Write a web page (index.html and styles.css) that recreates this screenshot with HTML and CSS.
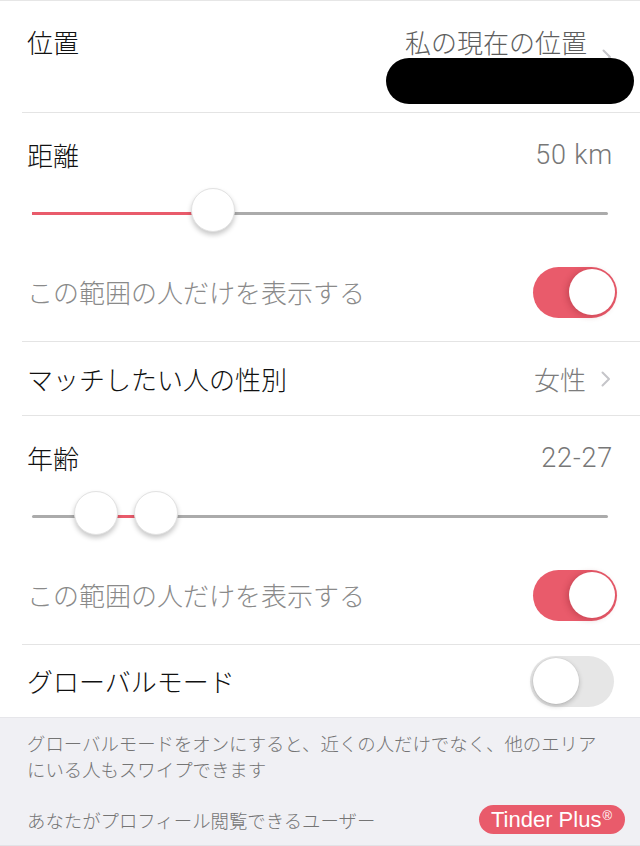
FILE: index.html
```html
<!DOCTYPE html>
<html lang="ja">
<head>
<meta charset="utf-8">
<title>設定</title>
<link rel="stylesheet" href="styles.css">
</head>
<body>
<main class="settings">
  <section class="row row-location">
    <span class="label label-top">位置</span>
    <span class="value value-top">私の現在の位置</span>
    <svg class="chev chev-mid" width="10" height="16" viewBox="0 0 10 16"><polyline points="1.5,1.5 8,8 1.5,14.5" /></svg>
    <div class="redact"></div>
  </section>
  <div class="sep"></div>

  <section class="group">
    <div class="head">
      <span class="label">距離</span>
      <span class="value num">50 km</span>
    </div>
    <div class="slider">
      <div class="track">
        <div class="fill" style="left:0%;width:31.4%"></div>
      </div>
      <div class="thumb" style="left:31.4%"></div>
    </div>
    <div class="toggle-line">
      <span class="sub">この範囲の人だけを表示する</span>
      <span class="toggle on"><span class="knob"></span></span>
    </div>
  </section>
  <div class="sep"></div>

  <section class="row row-simple">
    <span class="label">マッチしたい人の性別</span>
    <span class="value">女性</span>
    <svg class="chev" width="10" height="16" viewBox="0 0 10 16"><polyline points="1.5,1.5 8,8 1.5,14.5" /></svg>
  </section>
  <div class="sep"></div>

  <section class="group">
    <div class="head">
      <span class="label">年齢</span>
      <span class="value num">22-27</span>
    </div>
    <div class="slider">
      <div class="track">
        <div class="fill" style="left:11.1%;width:10.4%"></div>
      </div>
      <div class="thumb" style="left:11.1%"></div>
      <div class="thumb" style="left:21.5%"></div>
    </div>
    <div class="toggle-line">
      <span class="sub">この範囲の人だけを表示する</span>
      <span class="toggle on"><span class="knob"></span></span>
    </div>
  </section>
  <div class="sep"></div>

  <section class="row row-global">
    <span class="label">グローバルモード</span>
    <span class="toggle off"><span class="knob"></span></span>
  </section>

  <footer class="footer">
    <p class="note">グローバルモードをオンにすると、近くの人だけでなく、他のエリアにいる人もスワイプできます</p>
    <div class="footer-row">
      <span class="note">あなたがプロフィール閲覧できるユーザー</span>
      <span class="badge">Tinder Plus<sup>®</sup></span>
    </div>
  </footer>
</main>
</body>
</html>
```

FILE: styles.css
```css
* { box-sizing: border-box; }

html, body {
  margin: 0;
  padding: 0;
  background: #ffffff;
}

body {
  font-family: "Noto Sans CJK JP", sans-serif;
  width: 640px;
  overflow: hidden;
}

.settings {
  border-top: 1px solid #e6e6e6;
}

.label {
  font-size: 26px;
  line-height: 32px;
  font-weight: 300;
  color: #111111;
  flex: 1;
}

.value {
  font-size: 26px;
  line-height: 32px;
  color: #7c7c7c;
  font-weight: 300;
}

.value.num {
  font-family: "Roboto", sans-serif;
  font-size: 27px;
  letter-spacing: 0.8px;
  color: #777777;
}

.row {
  display: flex;
  align-items: center;
  padding: 0 27px;
}

.row-location {
  position: relative;
  height: 111px;
  padding-right: 28px;
}

.label-top, .value-top {
  align-self: flex-start;
  margin-top: 25px;
}

.value-top {
  color: #5e5e5e;
}

.chev {
  margin-left: 15px;
  flex: none;
}

.chev polyline {
  fill: none;
  stroke: #c5c5c9;
  stroke-width: 2;
  stroke-linecap: round;
  stroke-linejoin: round;
}

.redact {
  position: absolute;
  left: 386px;
  top: 57px;
  width: 248px;
  height: 46px;
  border-radius: 23px;
  background: #000000;
}

.sep {
  height: 1px;
  margin-left: 22px;
  background: #e4e4e4;
}

.group {
  height: 228px;
  display: flex;
  flex-direction: column;
}

.head {
  display: flex;
  align-items: center;
  padding: 26px 27px 0 27px;
  height: 58px;
}

.slider {
  position: relative;
  height: 84px;
  margin: 0 32px;
  display: flex;
  align-items: center;
}

.track {
  position: relative;
  width: 100%;
  height: 3px;
  border-radius: 2px;
  background: #ababab;
}

.fill {
  position: absolute;
  top: 0;
  height: 3px;
  background: #e95b6b;
}

.thumb {
  position: absolute;
  top: 50%;
  width: 44px;
  height: 44px;
  margin-left: -22px;
  margin-top: -25px;
  border-radius: 50%;
  background: #ffffff;
  border: 1px solid #e2e2e2;
  box-shadow: 0 3px 5px rgba(0, 0, 0, 0.22);
}

.toggle-line {
  display: flex;
  align-items: center;
  justify-content: space-between;
  height: 74px;
  padding: 0 23px 0 27px;
}

.sub {
  font-size: 26px;
  line-height: 32px;
  font-weight: 300;
  color: #8a8a8a;
}

.toggle {
  position: relative;
  display: block;
  width: 84px;
  height: 51px;
  border-radius: 26px;
  flex: none;
}

.toggle .knob {
  position: absolute;
  top: 2.5px;
  width: 46px;
  height: 46px;
  border-radius: 50%;
  background: #ffffff;
}

.toggle.on {
  background: #e95b6b;
}

.toggle.on .knob {
  right: 2.5px;
  box-shadow: -2px 1px 6px rgba(120, 20, 30, 0.3);
}

.toggle.off {
  background: #e6e6e6;
  margin-right: 3px;
}

.toggle.off .knob {
  left: 2.5px;
  box-shadow: 0 2px 5px rgba(0, 0, 0, 0.22), 0 0 0 0.5px rgba(0, 0, 0, 0.06);
}

.row-simple {
  height: 73px;
  padding-right: 29px;
}

.row-global {
  height: 72px;
  padding-right: 23px;
}

.footer {
  background: #f0f0f4;
  border-top: 1px solid #e6e6ea;
  height: 129px;
  padding: 12px 34px 0 27px;
  border-bottom: 1px solid #e2e2e6;
}

.note {
  margin: 0;
  font-size: 18.4px;
  line-height: 26px;
  font-weight: 300;
  color: #747474;
}

.footer-row {
  display: flex;
  align-items: center;
  justify-content: space-between;
  margin-top: 23px;
  margin-right: -19px;
}

.badge {
  display: flex;
  align-items: center;
  height: 29px;
  padding: 0 13px 0 12px;
  border-radius: 15px;
  background: #e95b6b;
  color: #ffffff;
  font-family: "Liberation Sans", sans-serif;
  font-size: 22px;
  line-height: 29px;
}

.badge sup {
  font-size: 13px;
  line-height: 1;
  align-self: flex-start;
  margin-top: 4px;
  margin-left: 1px;
}
```
